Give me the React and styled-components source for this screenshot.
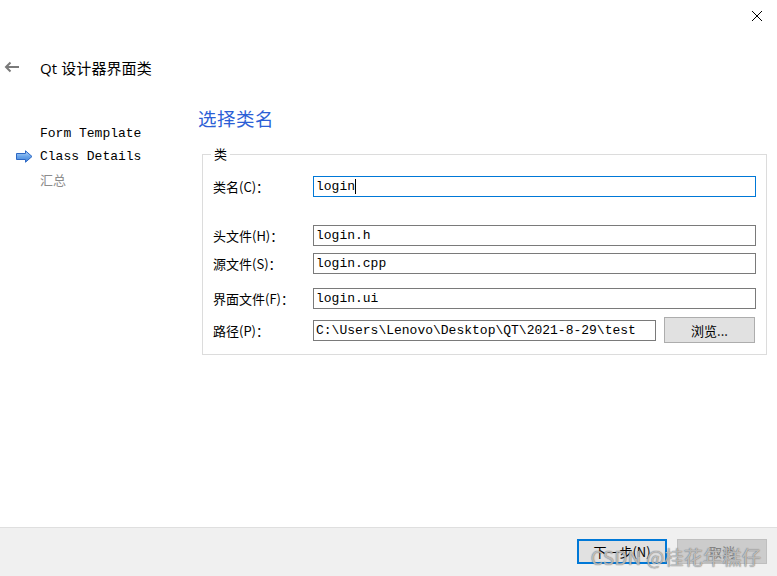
import React from "react";
import styled, { createGlobalStyle } from "styled-components";

const GlobalStyle = createGlobalStyle`
  html, body {
    margin: 0;
    padding: 0;
    background: #ffffff;
  }
  * {
    box-sizing: border-box;
  }
`;

const cjk = `"Noto Sans CJK SC", "Noto Sans", sans-serif`;
const mono = `"Liberation Mono", "Noto Sans CJK SC", monospace`;

const Window = styled.div`
  position: relative;
  width: 777px;
  height: 576px;
  display: flex;
  flex-direction: column;
  background: #ffffff;
  overflow: hidden;
`;

const TitleBar = styled.div`
  height: 52px;
  display: flex;
  justify-content: flex-end;
  align-items: flex-start;
  padding: 10px 14px 0 0;
`;

const CloseButton = styled.div`
  width: 12px;
  height: 12px;
  display: flex;
  svg {
    display: block;
  }
`;

const Header = styled.div`
  height: 30px;
  display: flex;
  align-items: center;
`;

const BackButton = styled.div`
  width: 40px;
  padding-left: 4px;
  display: flex;
  align-items: center;
`;

const Title = styled.div`
  font-family: "Open Sans", ${cjk};
  font-size: 15px;
  color: #000;
  letter-spacing: 0.1px;
`;

const Body = styled.div`
  flex: 1;
  display: flex;
`;

const Sidebar = styled.div`
  flex: none;
  width: 198px;
  padding-top: 40px;
  display: flex;
  flex-direction: column;
`;

const NavItem = styled.div`
  position: relative;
  height: 23px;
  line-height: 23px;
  padding-left: 40px;
  font-family: ${p => (p.$cjk ? cjk : mono)};
  font-size: 13px;
  color: ${p => (p.$muted ? "#8c8c8c" : "#000")};
  white-space: nowrap;
`;

const NavArrow = styled.span`
  position: absolute;
  left: 16px;
  top: 5px;
  display: flex;
`;

const Main = styled.div`
  flex: 1;
  min-width: 0;
  padding-top: 24px;
  padding-right: 10px;
`;

const PageTitle = styled.div`
  font-family: ${cjk};
  font-size: 18.5px;
  line-height: 24px;
  color: #2d5fd6;
  letter-spacing: 0.5px;
`;

const Group = styled.fieldset`
  margin: 16px 0 0 4px;
  padding: 14px 10px 11px 10px;
  border: 1px solid #dcdcdc;
  min-width: 0;
`;

const Legend = styled.legend`
  font-family: ${cjk};
  font-size: 13px;
  line-height: 16px;
  padding: 0 3px;
  margin-left: -2px;
  color: #000;
`;

const Row = styled.div`
  display: flex;
  align-items: center;
  height: ${p => p.$h || 21}px;
  margin-top: ${p => p.$mt || 0}px;
`;

const Label = styled.label`
  width: 100px;
  flex: none;
  font-family: ${cjk};
  font-size: 13px;
  color: #000;
  white-space: nowrap;
`;

const Input = styled.div`
  flex: ${p => (p.$w ? "none" : 1)};
  width: ${p => (p.$w ? `${p.$w}px` : "auto")};
  height: 21px;
  border: 1px solid ${p => (p.$focus ? "#0078d7" : "#7a7a7a")};
  padding-left: 2px;
  font-family: ${mono};
  font-size: 13px;
  line-height: 19px;
  color: #000;
  white-space: nowrap;
  overflow: hidden;
  display: flex;
  align-items: center;
`;

const Caret = styled.span`
  display: inline-block;
  width: 1px;
  height: 15px;
  background: #000;
`;

const BrowseButton = styled.div`
  flex: none;
  width: 91px;
  height: 26px;
  margin: 0 1px 0 8px;
  border: 1px solid #adadad;
  background: #e1e1e1;
  font-family: ${cjk};
  font-size: 13px;
  color: #000;
  display: flex;
  align-items: center;
  justify-content: center;
`;

const Footer = styled.div`
  height: 49px;
  border-top: 1px solid #dfdfdf;
  background: #f0f0f0;
  display: flex;
  justify-content: flex-end;
  align-items: flex-start;
  gap: 10px;
  padding: 11px 10px 0 0;
`;

const DialogButton = styled.div`
  width: 90px;
  height: 25px;
  border: ${p => (p.$default ? "2px solid #0078d7" : "1px solid #bfbfbf")};
  background: ${p => (p.$disabled ? "#cccccc" : "#e1e1e1")};
  color: ${p => (p.$disabled ? "#838383" : "#000")};
  font-family: ${cjk};
  font-size: 13px;
  display: flex;
  align-items: center;
  justify-content: center;
`;

const Watermark = styled.div`
  position: absolute;
  right: 16px;
  bottom: 6px;
  font-family: ${cjk};
  font-size: 19px;
  letter-spacing: 0.3px;
  color: rgba(255, 255, 255, 0.55);
  text-shadow: 0 0 1px rgba(90, 90, 90, 0.7), 0 0 1px rgba(90, 90, 90, 0.7);
  pointer-events: none;
  white-space: nowrap;
`;

const CloseIcon = () => (
  <svg width="12" height="12" viewBox="0 0 12 12">
    <path d="M1 1 L11 11 M11 1 L1 11" stroke="#000" strokeWidth="1" />
  </svg>
);

const BackIcon = () => (
  <svg width="16" height="12" viewBox="0 0 16 12">
    <path d="M15 6 H2 M6.5 1.5 L2 6 L6.5 10.5" stroke="#7a7a7a" strokeWidth="2" fill="none" />
  </svg>
);

const StepArrow = () => (
  <svg width="17" height="13" viewBox="0 0 17 13">
    <defs>
      <linearGradient id="arrowFill" x1="0" y1="0" x2="0" y2="1">
        <stop offset="0" stopColor="#b9d6f7" />
        <stop offset="0.5" stopColor="#6aa5ea" />
        <stop offset="1" stopColor="#3f7fd6" />
      </linearGradient>
    </defs>
    <path
      d="M0.5 3.5 H9.5 V0.8 L16 6.5 L9.5 12.2 V9.5 H0.5 Z"
      fill="url(#arrowFill)"
      stroke="#2d68c4"
      strokeWidth="1"
      strokeLinejoin="round"
    />
  </svg>
);

const fields = [
  { label: "头文件(H)：", value: "login.h", mt: 28 },
  { label: "源文件(S)：", value: "login.cpp", mt: 7 },
  { label: "界面文件(F)：", value: "login.ui", mt: 14 },
];

export default function App() {
  return (
    <Window>
      <GlobalStyle />
      <TitleBar>
        <CloseButton>
          <CloseIcon />
        </CloseButton>
      </TitleBar>
      <Header>
        <BackButton>
          <BackIcon />
        </BackButton>
        <Title>Qt 设计器界面类</Title>
      </Header>
      <Body>
        <Sidebar>
          <NavItem>Form Template</NavItem>
          <NavItem>
            <NavArrow>
              <StepArrow />
            </NavArrow>
            Class Details
          </NavItem>
          <NavItem $cjk $muted>
            汇总
          </NavItem>
        </Sidebar>
        <Main>
          <PageTitle>选择类名</PageTitle>
          <Group>
            <Legend>类</Legend>
            <Row>
              <Label>类名(C)：</Label>
              <Input $focus>
                login
                <Caret />
              </Input>
            </Row>
            {fields.map(f => (
              <Row key={f.label} $mt={f.mt}>
                <Label>{f.label}</Label>
                <Input>{f.value}</Input>
              </Row>
            ))}
            <Row $h={26} $mt={8}>
              <Label>路径(P)：</Label>
              <Input $w={343}>C:\Users\Lenovo\Desktop\QT\2021-8-29\test</Input>
              <BrowseButton>浏览...</BrowseButton>
            </Row>
          </Group>
        </Main>
      </Body>
      <Footer>
        <DialogButton $default>下一步(N)</DialogButton>
        <DialogButton $disabled>取消</DialogButton>
      </Footer>
      <Watermark>CSDN @桂花年糕仔</Watermark>
    </Window>
  );
}
